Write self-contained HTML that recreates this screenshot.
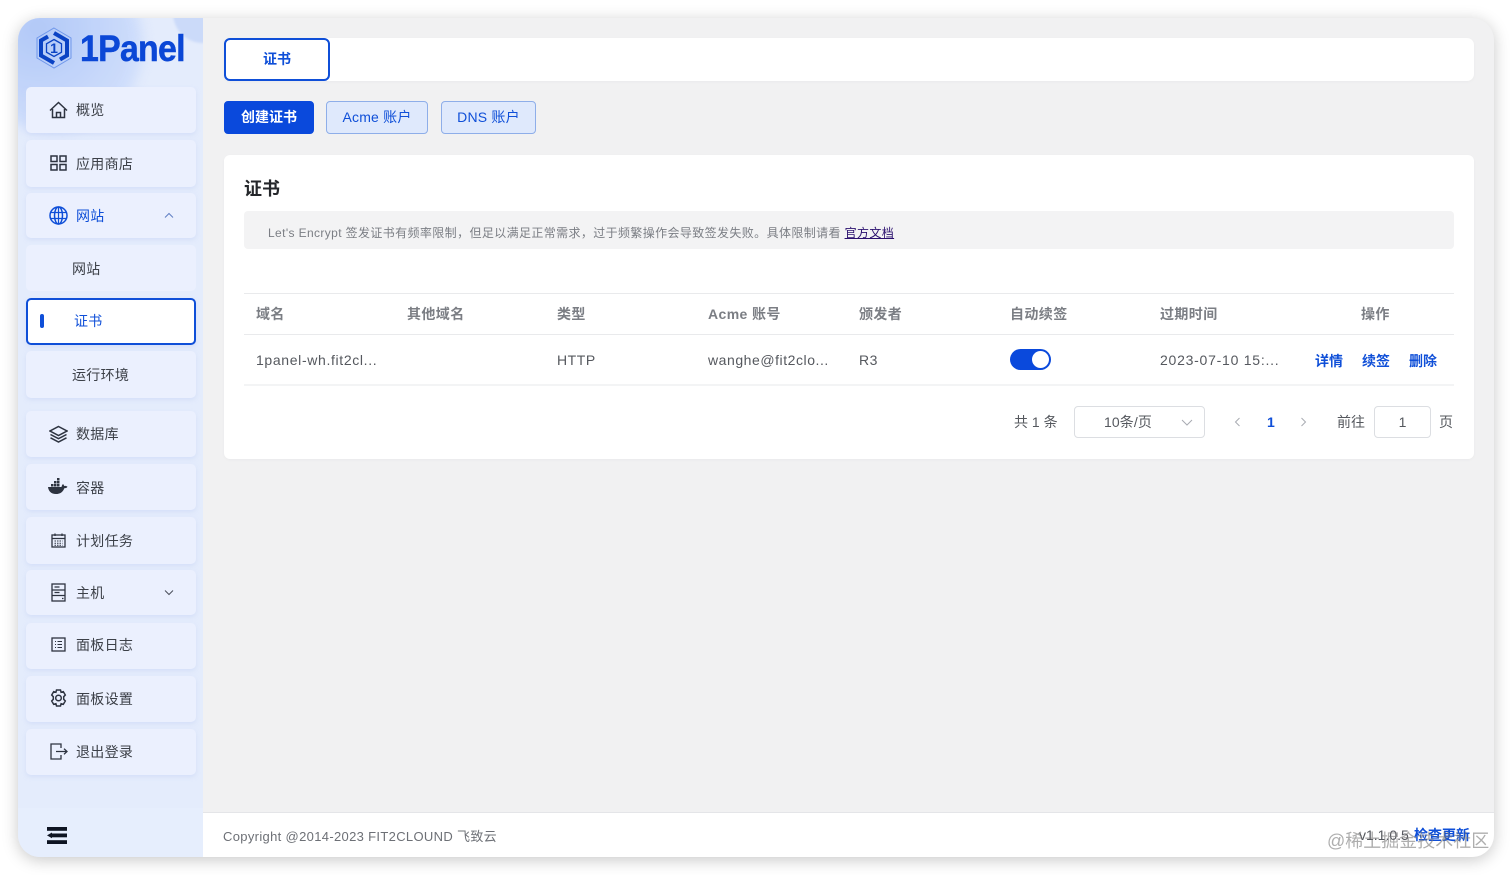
<!DOCTYPE html>
<html lang="zh"><head><meta charset="utf-8"><title>1Panel</title>
<style>
*{box-sizing:border-box}
html,body{margin:0;padding:0;width:1512px;height:875px;overflow:hidden;background:#fff;font-family:"Liberation Sans","Noto Sans CJK SC",sans-serif;color:#43464c}
.a{position:absolute;white-space:nowrap}
#win{position:absolute;left:18px;top:18px;width:1476px;height:839px;border-radius:22px;background:#f1f1f2;overflow:hidden;box-shadow:0 3px 16px rgba(0,0,0,.22)}
#wrap{position:absolute;left:-18px;top:-18px;width:1512px;height:875px}
#side{position:absolute;left:18px;top:18px;width:185px;height:839px;background:#e4ecfc;overflow:hidden}
.m{position:absolute;left:26px;width:170px;background:#ebf0fe;border-radius:5px;box-shadow:0 2px 4px rgba(200,214,245,.55)}
.t{position:absolute;font-size:14px;line-height:20px;color:#3c4048;white-space:nowrap;letter-spacing:.3px}
svg.i{position:absolute;fill:none;stroke:#2d3340;stroke-width:1.5}
.card{position:absolute;background:#fff;border-radius:6px;box-shadow:0 1px 3px rgba(0,0,0,.03)}
.th{position:absolute;top:304px;font-size:14px;line-height:20px;font-weight:700;color:#7b7e84;white-space:nowrap;letter-spacing:.4px}
.td{position:absolute;top:350px;font-size:14px;line-height:20px;color:#55585e;white-space:nowrap;letter-spacing:.55px}
.op{position:absolute;top:351px;font-size:14px;line-height:20px;font-weight:700;color:#0f4fd8;white-space:nowrap}
.line{position:absolute;left:244px;width:1210px;height:1px;background:#e9eaec}
.btn{position:absolute;top:101px;height:33px;border-radius:4px;font-size:14px;line-height:31px;text-align:center;background:#dfe9fc;border:1px solid #8eaee9;color:#0f4fd8;letter-spacing:.2px}
</style></head><body>
<div id="win"><div id="wrap">

<div id="side">
  <div style="position:absolute;left:-50px;top:-60px;width:175px;height:175px;border-radius:50%;background:radial-gradient(circle at 40% 40%,#a9c3f6 0,#c4d6fa 55%,#d9e5fd 100%);filter:blur(6px);opacity:.85"></div>
  <div style="position:absolute;left:155px;top:-35px;width:60px;height:60px;border-radius:50%;background:#cbdaf9;filter:blur(1px)"></div>
</div>

<svg style="position:absolute;left:35px;top:27px" width="38" height="42" viewBox="0 0 38 42" fill="none">
  <path d="M19 1L36 11v20L19 41 2 31V11z" stroke="#6f97ea" stroke-width="1"/>
  <path d="M19 6L32 13.500V28.500L25 32.500M19 36L6 28.500V13.500L13 9.500" stroke="#0b43c4" stroke-width="4"/>
  <path d="M19 12.500L26.500 16.800V25.200L19 29.500 11.500 25.200V16.800z" stroke="#0b43c4" stroke-width="1.300"/>
  <text x="19" y="26" text-anchor="middle" font-family="Liberation Sans" font-weight="700" font-size="14" fill="#0b43c4" stroke="none">1</text>
</svg>
<div class="a" style="left:80px;top:27px;font-size:37px;line-height:44px;font-weight:700;color:#0b47d6;letter-spacing:-.8px;transform:scaleX(.915);transform-origin:0 0;-webkit-text-stroke:.5px #0b47d6">1Panel</div>

<div class="m" style="top:87px;height:46px"></div>
<div class="m" style="top:140px;height:47px"></div>
<div class="m" style="top:193px;height:45px"></div>
<div class="m" style="top:245px;height:46px;box-shadow:none"></div>
<div class="m" style="top:298px;height:47px;background:#fff;border:2px solid #0f4fd8"></div>
<div class="m" style="top:351px;height:47px"></div>
<div class="m" style="top:411px;height:46px"></div>
<div class="m" style="top:464px;height:46px"></div>
<div class="m" style="top:517px;height:47px"></div>
<div class="m" style="top:570px;height:45px"></div>
<div class="m" style="top:623px;height:46px"></div>
<div class="m" style="top:676px;height:46px"></div>
<div class="m" style="top:729px;height:46px"></div>

<svg class="i" style="left:49px;top:101px" width="19" height="18" viewBox="0 0 19 18"><path d="M1 9.500L9.500 1.500 18 9.500M3.500 8v8.500h12V8M7.500 16.500v-5h4v5"/></svg>
<div class="t" style="left:76px;top:100px">概览</div>

<svg class="i" style="left:50px;top:155px" width="17" height="16" viewBox="0 0 17 16"><rect x="1" y="1" width="6" height="5.500"/><rect x="10" y="1" width="6" height="5.500"/><rect x="1" y="9.500" width="6" height="5.500"/><rect x="10" y="9.500" width="6" height="5.500"/></svg>
<div class="t" style="left:76px;top:154px">应用商店</div>

<svg class="i" style="left:49px;top:206px;stroke:#0f4fd8" width="19" height="19" viewBox="0 0 19 19"><circle cx="9.500" cy="9.500" r="8.500"/><ellipse cx="9.500" cy="9.500" rx="4" ry="8.500"/><path d="M9.500 1v17M1.500 6.500h16M1.500 12.500h16" stroke-width="1.200"/></svg>
<div class="t" style="left:76px;top:206px;color:#0f4fd8">网站</div>
<svg class="i" style="left:164px;top:212px;stroke:#5f7fc4;stroke-width:1" width="10" height="7" viewBox="0 0 10 7"><path d="M1 5.500L5 1.500l4 4"/></svg>

<div class="t" style="left:72px;top:259px">网站</div>
<div class="a" style="left:40px;top:314px;width:4px;height:14px;border-radius:2px;background:#0f4fd8"></div>
<div class="t" style="left:74px;top:311px;color:#0f4fd8">证书</div>
<div class="t" style="left:72px;top:365px">运行环境</div>

<svg class="i" style="left:49px;top:425px" width="19" height="18" viewBox="0 0 19 18"><path d="M9.500 1.500L18 6l-8.500 4.500L1 6zM1.500 9.500l8 4.200 8-4.200M1.500 12.800l8 4.200 8-4.200"/></svg>
<div class="t" style="left:76px;top:424px">数据库</div>

<svg style="position:absolute;left:48px;top:478px" width="21" height="17" viewBox="0 0 21 17" fill="#2d3340"><rect x="3" y="6" width="2.500" height="2.500"/><rect x="6" y="6" width="2.500" height="2.500"/><rect x="9" y="6" width="2.500" height="2.500"/><rect x="6" y="3" width="2.500" height="2.500"/><rect x="9" y="3" width="2.500" height="2.500"/><rect x="9" y="0" width="2.500" height="2.500"/><path d="M0 9h13.500c.2-1.500 1-2.500 1.500-3 .7.600 1 1.300 1.100 2 1.200-.3 2.500 0 3.400.7-.7 1.200-1.900 1.500-3.200 1.500C15 14 12 16 8 16 3 16 .5 13 0 9z"/></svg>
<div class="t" style="left:76px;top:478px">容器</div>

<svg class="i" style="left:51px;top:533px;stroke-width:1.300" width="15" height="15" viewBox="0 0 15 15"><rect x="1" y="2" width="13" height="12"/><path d="M4 .5V3M11 .5V3M1 5.500h13"/><path d="M3.500 8h8M3.500 10.200h8M3.500 12.200h8" stroke-width="1" stroke-dasharray="1.500 1"/></svg>
<div class="t" style="left:76px;top:531px">计划任务</div>

<svg class="i" style="left:51px;top:583px;stroke-width:1.300" width="15" height="19" viewBox="0 0 15 19"><rect x="1" y="1" width="13" height="17"/><path d="M1 7h13M1 12.500h13M3.500 4h5M3.500 9.500h5M11 15.500h1.500"/></svg>
<div class="t" style="left:76px;top:583px">主机</div>
<svg class="i" style="left:164px;top:589px;stroke:#4a4f5a;stroke-width:1" width="10" height="7" viewBox="0 0 10 7"><path d="M1 1.500L5 5.500l4-4"/></svg>

<svg class="i" style="left:51px;top:637px;stroke-width:1.300" width="15" height="15" viewBox="0 0 15 15"><rect x="1" y="1" width="13" height="13"/><path d="M4 4.500h1M6.500 4.500H11M4 7.500h1M6.500 7.500H11M4 10.500h1M6.500 10.500H11" stroke-width="1"/></svg>
<div class="t" style="left:76px;top:635px">面板日志</div>

<svg class="i" style="left:49px;top:689px" width="19" height="18" viewBox="0 0 19 18"><path d="M7.500 1h4l.6 2.300 2.200-.7 2 3.400-1.600 1.700v2.600l1.600 1.700-2 3.400-2.200-.7-.6 2.300h-4l-.6-2.300-2.200.7-2-3.400 1.600-1.700V7.700L2.700 6l2-3.400 2.200.7z"/><circle cx="9.500" cy="9" r="2.800"/></svg>
<div class="t" style="left:76px;top:689px">面板设置</div>

<svg class="i" style="left:50px;top:743px;stroke-width:1.300" width="18" height="17" viewBox="0 0 18 17"><path d="M11 5V1H1v15h10v-4M6 8.500h11M14 5.700l3 2.800-3 2.800"/></svg>
<div class="t" style="left:76px;top:742px">退出登录</div>

<div class="a" style="left:18px;top:808px;width:185px;height:49px;background:#e6eefd"></div>
<svg style="position:absolute;left:47px;top:827px" width="20" height="17" viewBox="0 0 20 17" fill="#0e1422"><rect width="20" height="3.800"/><rect x="5" y="6.500" width="15" height="3.800"/><rect y="13.200" width="20" height="3.800"/><path d="M0 8.400L5 5.500v5.800z"/></svg>

<!-- top tab bar -->
<div class="card" style="left:224px;top:38px;width:1250px;height:43px;border-radius:7px"></div>
<div class="a" style="left:224px;top:38px;width:106px;height:43px;background:#fff;border:2px solid #0f4fd8;border-radius:6px;text-align:center;font-size:14px;line-height:39px;font-weight:700;color:#0f4fd8">证书</div>

<div class="btn" style="left:224px;width:90px;background:#0a49dc;border-color:#0a49dc;color:#fff;font-weight:700;letter-spacing:0">创建证书</div>
<div class="btn" style="left:326px;width:102px">Acme 账户</div>
<div class="btn" style="left:441px;width:95px">DNS 账户</div>

<div class="card" style="left:224px;top:155px;width:1250px;height:304px"></div>
<div class="a" style="left:244px;top:177px;font-size:18px;line-height:24px;font-weight:700;color:#25272b">证书</div>
<div class="a" style="left:244px;top:211px;width:1210px;height:38px;background:#f3f3f4;border-radius:4px"></div>
<div class="a" style="left:268px;top:223px;font-size:12px;line-height:20px;color:#7b7e84;letter-spacing:.38px">Let's Encrypt 签发证书有频率限制，但足以满足正常需求，过于频繁操作会导致签发失败。具体限制请看 <span style="color:#2a0f6e;text-decoration:underline">官方文档</span></div>

<div class="line" style="top:293px"></div>
<div class="line" style="top:334px"></div>
<div class="line" style="top:384px;height:2px;background:#f3f4f5"></div>

<div class="th" style="left:256px">域名</div>
<div class="th" style="left:407px">其他域名</div>
<div class="th" style="left:557px">类型</div>
<div class="th" style="left:708px">Acme 账号</div>
<div class="th" style="left:859px">颁发者</div>
<div class="th" style="left:1010px">自动续签</div>
<div class="th" style="left:1160px">过期时间</div>
<div class="th" style="left:1361px">操作</div>

<div class="td" style="left:256px;letter-spacing:.65px">1panel-wh.fit2cl...</div>
<div class="td" style="left:557px">HTTP</div>
<div class="td" style="left:708px">wanghe@fit2clo...</div>
<div class="td" style="left:859px">R3</div>
<div class="a" style="left:1010px;top:349px;width:41px;height:21px;border-radius:11px;background:#0a49dc"></div>
<div class="a" style="left:1032px;top:351px;width:17px;height:17px;border-radius:50%;background:#fff"></div>
<div class="td" style="left:1160px;letter-spacing:.75px">2023-07-10 15:...</div>
<div class="op" style="left:1315px">详情</div>
<div class="op" style="left:1362px">续签</div>
<div class="op" style="left:1409px">删除</div>

<div class="a" style="left:1014px;top:412px;font-size:14px;line-height:20px;color:#55585e">共 1 条</div>
<div class="a" style="left:1074px;top:406px;width:131px;height:32px;border:1px solid #dcdee2;border-radius:4px;background:#fff"></div>
<div class="a" style="left:1104px;top:412px;font-size:14px;line-height:20px;color:#55585e;letter-spacing:.1px">10条/页</div>
<svg style="position:absolute;left:1181px;top:419px" width="12" height="7" viewBox="0 0 12 7" fill="none" stroke="#a8abb2"><path d="M1 1l5 5 5-5"/></svg>
<svg style="position:absolute;left:1234px;top:417px" width="7" height="10" viewBox="0 0 7 10" fill="none" stroke="#a8abb2"><path d="M5.500 1L1.500 5l4 4"/></svg>
<div class="a" style="left:1267px;top:412px;font-size:14px;line-height:20px;font-weight:700;color:#0f4fd8">1</div>
<svg style="position:absolute;left:1300px;top:417px" width="7" height="10" viewBox="0 0 7 10" fill="none" stroke="#a8abb2"><path d="M1.500 1l4 4-4 4"/></svg>
<div class="a" style="left:1337px;top:412px;font-size:14px;line-height:20px;color:#55585e">前往</div>
<div class="a" style="left:1374px;top:406px;width:57px;height:32px;border:1px solid #dcdee2;border-radius:4px;background:#fff;text-align:center;font-size:14px;line-height:30px;color:#55585e">1</div>
<div class="a" style="left:1439px;top:412px;font-size:14px;line-height:20px;color:#55585e">页</div>

<!-- footer -->
<div class="a" style="left:203px;top:812px;width:1291px;height:45px;background:#fff;border-top:1px solid #e4e5e8"></div>
<div class="a" style="left:223px;top:827px;font-size:13px;line-height:20px;color:#6d7076;letter-spacing:.33px">Copyright @2014-2023 FIT2CLOUND 飞致云</div>
<div class="a" style="left:1359px;top:825px;font-size:14px;line-height:20px;color:#55585e">v1.1.0.5</div>
<div class="a" style="left:1414px;top:825px;font-size:14px;line-height:20px;font-weight:700;color:#0f4fd8">检查更新</div>
</div></div>
<div class="a" style="left:1327px;top:830px;font-size:18px;line-height:22px;color:rgba(120,120,120,.6)">@稀土掘金技术社区</div>
</body></html>
